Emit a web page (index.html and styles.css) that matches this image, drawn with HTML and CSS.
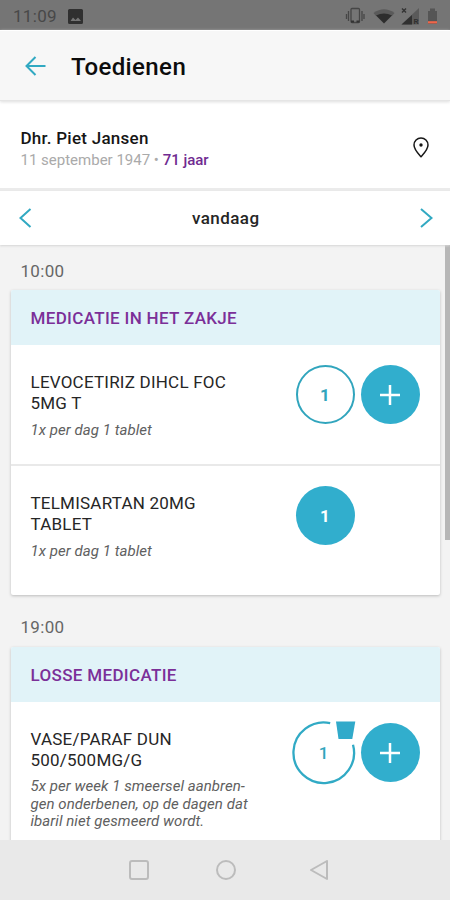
FILE: index.html
```html
<!DOCTYPE html>
<html lang="nl">
<head>
<meta charset="utf-8">
<title>Toedienen</title>
<link rel="stylesheet" href="styles.css">
</head>
<body>
<div class="app">
  <div class="status">
    <span class="clock">11:09</span>
    <svg class="photo" width="15" height="15" viewBox="0 0 15 15"><path fill="#303030" fill-rule="evenodd" d="M1.500 0h12A1.500 1.500 0 0 1 15 1.500v12a1.500 1.500 0 0 1-1.500 1.500h-12A1.500 1.500 0 0 1 0 13.500v-12A1.500 1.500 0 0 1 1.500 0zM2.500 12h10.500L10 8.500 7.500 11 5 8.500z"/></svg>
    <svg class="indicators" width="96" height="20" viewBox="0 0 96 20">
      <g fill="none" stroke="#464646" stroke-width="1.300"><rect x="7" y="2.500" width="8.500" height="14" rx="1"/><path d="M4.500 5v10M18 5v10M2.500 8v5M20 8v5"/></g>
      <path fill="#333" d="M7 14.500h3v2H7zM12.500 14.500h3v2h-3z"/>
      <path fill="#5a5a5a" d="M29.500 7Q40 -.5 50.500 7L48 10H32z"/><path fill="#2d2d2d" d="M32 9.500Q40 5.500 48 9.500L40 17.500z"/>
      <path fill="#5a5a5a" d="M75 2v16.500H57.500z"/><path fill="#303030" d="M68 9v9.500H57.500z"/><path d="M58 2.500l4 4M62 2.500l-4 4" stroke="#333" stroke-width="1.400"/>
      <text x="69.500" y="18" class="roam">R</text>
      <path fill="#555" d="M84 5h2V2.500h5V5h2v13h-9z"/><path fill="#f0664a" d="M84 15.200h9v2.300h-9z"/>
    </svg>
  </div>
  <header class="bar">
    <svg width="22" height="20" viewBox="0 0 22 20"><path class="line" d="M20.500 10H2M10.500 1L1.500 10l9 9"/></svg>
    <h1>Toedienen</h1>
  </header>
  <section class="patient">
    <div>
      <div class="name">Dhr. Piet Jansen</div>
      <div class="born">11 september 1947 • <b>71 jaar</b></div>
    </div>
    <svg width="16" height="21" viewBox="0 0 16 21"><path d="M8 19.700C5.500 17 1 12.500 1 8a7 7 0 0 1 14 0c0 4.500-4.500 9-7 11.700z" fill="none" stroke="#171717" stroke-width="1.500"/><circle cx="8" cy="8" r="1.700" fill="#171717"/></svg>
  </section>
  <nav class="days">
    <svg width="13" height="20" viewBox="0 0 13 20"><path class="line" d="M11.500 1L1.500 10l10 9"/></svg>
    <span>vandaag</span>
    <svg width="13" height="20" viewBox="0 0 13 20"><path class="line" d="M1 1l10.500 9L1 19"/></svg>
  </nav>
  <main class="list">
    <div class="time">10:00</div>
    <section class="card">
      <h2>MEDICATIE IN HET ZAKJE</h2>
      <article class="med">
        <div><h3>LEVOCETIRIZ DIHCL FOC<br>5MG T</h3><p>1x per dag 1 tablet</p></div>
        <div class="actions">
          <span class="dot ring">1</span>
          <span class="dot"><svg width="20" height="20" viewBox="0 0 20 20"><path d="M10 0v20M0 10h20" stroke="#fff" stroke-width="2.500"/></svg></span>
        </div>
      </article>
      <article class="med second">
        <div><h3>TELMISARTAN 20MG<br>TABLET</h3><p>1x per dag 1 tablet</p></div>
        <div class="actions"><span class="dot">1</span></div>
      </article>
    </section>
    <div class="time later">19:00</div>
    <section class="card">
      <h2>LOSSE MEDICATIE</h2>
      <article class="med last">
        <div><h3>VASE/PARAF DUN<br>500/500MG/G</h3><p>5x per week 1 smeersel aanbren-<br>gen onderbenen, op de dagen dat<br>ibaril niet gesmeerd wordt.</p></div>
        <div class="actions">
          <span class="cup"><svg width="64" height="64" viewBox="0 0 64 64"><path d="M38.200 2.100A30.300 30.300 0 1 0 61 23.800" fill="none" stroke="#31aac5" stroke-width="2.300"/><path d="M44 .5h19.300l-3 17.500H46.500z" fill="#31aaca"/></svg><span>1</span></span>
          <span class="dot"><svg width="20" height="20" viewBox="0 0 20 20"><path d="M10 0v20M0 10h20" stroke="#fff" stroke-width="2.500"/></svg></span>
        </div>
      </article>
    </section>
    <div class="thumb"></div>
  </main>
  <footer class="system">
    <svg width="20" height="20" viewBox="0 0 20 20"><rect x="1" y="1" width="18" height="18" rx="2"/></svg>
    <svg width="20" height="20" viewBox="0 0 20 20"><circle cx="10" cy="10" r="9"/></svg>
    <svg width="20" height="20" viewBox="0 0 20 20"><path d="M18 1v18L2 10z"/></svg>
  </footer>
</div>
</body>
</html>
```
FILE: styles.css
```css
* { box-sizing: border-box; margin: 0; padding: 0; }
body { font-family: Roboto, "Liberation Sans", sans-serif; background: #f3f3f3; color: #222; }
svg { display: block; flex: none; }
.app { height: 900px; display: flex; flex-direction: column; overflow: hidden; }
.status { height: 30px; flex: none; background: #757575; display: flex; align-items: center; padding: 2px 10px 0 13px; color: #484848; }
.clock { font-size: 17px; width: 55px; letter-spacing: .3px; }
.indicators { margin-left: auto; }
.roam { font-size: 8px; font-weight: 700; fill: #303030; }
.line { fill: none; stroke: #31a9c2; stroke-width: 2; }
.bar { height: 71px; flex: none; background: #f7f7f7; display: flex; align-items: center; padding: 0 25px; gap: 24px; border-top: 1px solid #fff; border-bottom: 1px solid #e5e5e5; box-shadow: 0 1px 3px #ddd; z-index: 1; }
h1 { font-size: 24px; font-weight: 500; color: #0c0c0c; letter-spacing: .4px; line-height: 30px; padding-top: 2px; }
.patient { height: 90px; flex: none; background: #fff; border-bottom: 3px solid #ebebeb; display: flex; justify-content: space-between; align-items: center; padding: 6px 21px 0 20.5px; }
.name { font-size: 17px; font-weight: 500; color: #161616; line-height: 22px; letter-spacing: .27px; padding-top: 3px; }
.born { font-size: 15px; color: #aaa; line-height: 22px; }
.born b { font-weight: 500; color: #702b91; }
.days { height: 54px; flex: none; background: #fff; display: flex; align-items: center; justify-content: space-between; padding: 0 17px 0 18.500px; font-size: 17px; font-weight: 500; color: #252525; letter-spacing: .45px; box-shadow: 0 1px 2px #d5d5d5; z-index: 1; }
.list { flex: 1; min-height: 0; overflow: hidden; position: relative; padding: 0 10px 0 10.5px; }
.time { height: 45px; padding: 16px 0 0 10px; font-size: 17px; line-height: 20px; color: #666; letter-spacing: .3px; }
.later { height: 52px; padding-top: 22px; }
.card { background: #fff; border-radius: 2px; box-shadow: 0 1px 3px #bbb; }
h2 { height: 55px; padding-left: 20px; background: #e1f3f8; color: #7b2f98; font-size: 17px; line-height: 57px; font-weight: 500; letter-spacing: .33px; border-radius: 2px 2px 0 0; }
.med { height: 119px; display: flex; justify-content: space-between; padding: 20px 0 0 20px; }
.med > div:first-child { padding-top: 7px; white-space: nowrap; }
.second { height: 131px; border-top: 2px solid #e9e9e9; }
.last { height: 180px; padding-top: 21px; }
.last > div:first-child { padding-top: 6px; }
h3 { font-size: 17px; line-height: 20.5px; font-weight: 400; color: #262626; letter-spacing: .22px; }
p { font-size: 15px; line-height: 17.5px; font-style: italic; color: #606060; margin-top: 9px; letter-spacing: .06px; }
.last p { margin-top: 8px; }
.actions { width: 144.5px; display: flex; gap: 6px; flex: none; }
.dot { width: 59px; height: 59px; border-radius: 50%; background: #31aecd; color: #fff; display: flex; align-items: center; justify-content: center; font-size: 17px; font-weight: 700; flex: none; }
.ring { background: #fff; border: 2px solid #31a5bd; color: #31a5bd; }
.cup { width: 64px; height: 64px; margin: -2px -1px 0 -4px; display: grid; place-items: center; color: #31a5bd; font-size: 17px; font-weight: 500; }
.cup > * { grid-area: 1 / 1; }
.thumb { position: absolute; right: 0; top: 0; width: 5px; height: 295px; background: #b7b7b7; }
.system { height: 60px; flex: none; background: #e9e9e9; display: flex; gap: 67px; align-items: center; padding-left: 129px; z-index: 1; }
.system svg { fill: none; stroke: #bcbcbc; stroke-width: 2; stroke-linejoin: round; }
.system svg:last-child { margin-left: 6px; }
```
